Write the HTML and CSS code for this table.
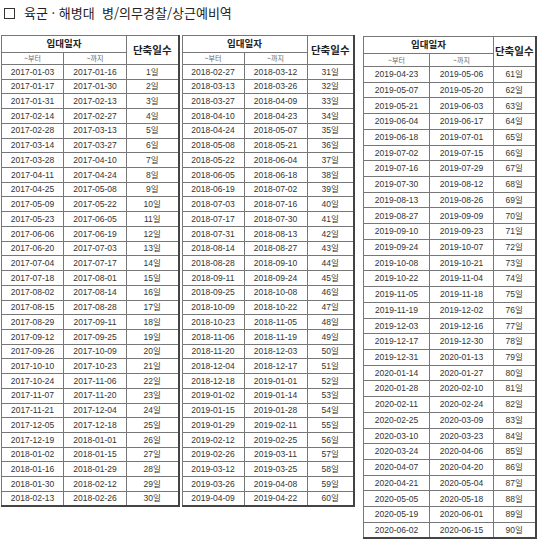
FILE: index.html
```html
<!DOCTYPE html>
<html lang="ko">
<head>
<meta charset="utf-8">
<link rel="stylesheet" href="styles.css">
</head>
<body>
<div class="title"><span class="box"></span><span class="title-text">육군 · 해병대&nbsp; 병/의무경찰/상근예비역</span></div>
<div class="tables">
<table class="t t1">
<colgroup><col class="c1"><col class="c2"><col class="c3"></colgroup>
<thead>
<tr class="h1"><th colspan="2">입대일자</th><th rowspan="2" class="days">단축일수</th></tr>
<tr class="h2"><th class="sub">~부터</th><th class="sub">~까지</th></tr>
</thead>
<tbody>
<tr><td>2017-01-03</td><td>2017-01-16</td><td>1일</td></tr>
<tr><td>2017-01-17</td><td>2017-01-30</td><td>2일</td></tr>
<tr><td>2017-01-31</td><td>2017-02-13</td><td>3일</td></tr>
<tr><td>2017-02-14</td><td>2017-02-27</td><td>4일</td></tr>
<tr><td>2017-02-28</td><td>2017-03-13</td><td>5일</td></tr>
<tr><td>2017-03-14</td><td>2017-03-27</td><td>6일</td></tr>
<tr><td>2017-03-28</td><td>2017-04-10</td><td>7일</td></tr>
<tr><td>2017-04-11</td><td>2017-04-24</td><td>8일</td></tr>
<tr><td>2017-04-25</td><td>2017-05-08</td><td>9일</td></tr>
<tr><td>2017-05-09</td><td>2017-05-22</td><td>10일</td></tr>
<tr><td>2017-05-23</td><td>2017-06-05</td><td>11일</td></tr>
<tr><td>2017-06-06</td><td>2017-06-19</td><td>12일</td></tr>
<tr><td>2017-06-20</td><td>2017-07-03</td><td>13일</td></tr>
<tr><td>2017-07-04</td><td>2017-07-17</td><td>14일</td></tr>
<tr><td>2017-07-18</td><td>2017-08-01</td><td>15일</td></tr>
<tr><td>2017-08-02</td><td>2017-08-14</td><td>16일</td></tr>
<tr><td>2017-08-15</td><td>2017-08-28</td><td>17일</td></tr>
<tr><td>2017-08-29</td><td>2017-09-11</td><td>18일</td></tr>
<tr><td>2017-09-12</td><td>2017-09-25</td><td>19일</td></tr>
<tr><td>2017-09-26</td><td>2017-10-09</td><td>20일</td></tr>
<tr><td>2017-10-10</td><td>2017-10-23</td><td>21일</td></tr>
<tr><td>2017-10-24</td><td>2017-11-06</td><td>22일</td></tr>
<tr><td>2017-11-07</td><td>2017-11-20</td><td>23일</td></tr>
<tr><td>2017-11-21</td><td>2017-12-04</td><td>24일</td></tr>
<tr><td>2017-12-05</td><td>2017-12-18</td><td>25일</td></tr>
<tr><td>2017-12-19</td><td>2018-01-01</td><td>26일</td></tr>
<tr><td>2018-01-02</td><td>2018-01-15</td><td>27일</td></tr>
<tr><td>2018-01-16</td><td>2018-01-29</td><td>28일</td></tr>
<tr><td>2018-01-30</td><td>2018-02-12</td><td>29일</td></tr>
<tr><td>2018-02-13</td><td>2018-02-26</td><td>30일</td></tr>
</tbody>
</table>
<table class="t t2">
<colgroup><col class="c1"><col class="c2"><col class="c3"></colgroup>
<thead>
<tr class="h1"><th colspan="2">입대일자</th><th rowspan="2" class="days">단축일수</th></tr>
<tr class="h2"><th class="sub">~부터</th><th class="sub">~까지</th></tr>
</thead>
<tbody>
<tr><td>2018-02-27</td><td>2018-03-12</td><td>31일</td></tr>
<tr><td>2018-03-13</td><td>2018-03-26</td><td>32일</td></tr>
<tr><td>2018-03-27</td><td>2018-04-09</td><td>33일</td></tr>
<tr><td>2018-04-10</td><td>2018-04-23</td><td>34일</td></tr>
<tr><td>2018-04-24</td><td>2018-05-07</td><td>35일</td></tr>
<tr><td>2018-05-08</td><td>2018-05-21</td><td>36일</td></tr>
<tr><td>2018-05-22</td><td>2018-06-04</td><td>37일</td></tr>
<tr><td>2018-06-05</td><td>2018-06-18</td><td>38일</td></tr>
<tr><td>2018-06-19</td><td>2018-07-02</td><td>39일</td></tr>
<tr><td>2018-07-03</td><td>2018-07-16</td><td>40일</td></tr>
<tr><td>2018-07-17</td><td>2018-07-30</td><td>41일</td></tr>
<tr><td>2018-07-31</td><td>2018-08-13</td><td>42일</td></tr>
<tr><td>2018-08-14</td><td>2018-08-27</td><td>43일</td></tr>
<tr><td>2018-08-28</td><td>2018-09-10</td><td>44일</td></tr>
<tr><td>2018-09-11</td><td>2018-09-24</td><td>45일</td></tr>
<tr><td>2018-09-25</td><td>2018-10-08</td><td>46일</td></tr>
<tr><td>2018-10-09</td><td>2018-10-22</td><td>47일</td></tr>
<tr><td>2018-10-23</td><td>2018-11-05</td><td>48일</td></tr>
<tr><td>2018-11-06</td><td>2018-11-19</td><td>49일</td></tr>
<tr><td>2018-11-20</td><td>2018-12-03</td><td>50일</td></tr>
<tr><td>2018-12-04</td><td>2018-12-17</td><td>51일</td></tr>
<tr><td>2018-12-18</td><td>2019-01-01</td><td>52일</td></tr>
<tr><td>2019-01-02</td><td>2019-01-14</td><td>53일</td></tr>
<tr><td>2019-01-15</td><td>2019-01-28</td><td>54일</td></tr>
<tr><td>2019-01-29</td><td>2019-02-11</td><td>55일</td></tr>
<tr><td>2019-02-12</td><td>2019-02-25</td><td>56일</td></tr>
<tr><td>2019-02-26</td><td>2019-03-11</td><td>57일</td></tr>
<tr><td>2019-03-12</td><td>2019-03-25</td><td>58일</td></tr>
<tr><td>2019-03-26</td><td>2019-04-08</td><td>59일</td></tr>
<tr><td>2019-04-09</td><td>2019-04-22</td><td>60일</td></tr>
</tbody>
</table>
<table class="t t3">
<colgroup><col class="c1"><col class="c2"><col class="c3"></colgroup>
<thead>
<tr class="h1"><th colspan="2">입대일자</th><th rowspan="2" class="days">단축일수</th></tr>
<tr class="h2"><th class="sub">~부터</th><th class="sub">~까지</th></tr>
</thead>
<tbody>
<tr><td>2019-04-23</td><td>2019-05-06</td><td>61일</td></tr>
<tr><td>2019-05-07</td><td>2019-05-20</td><td>62일</td></tr>
<tr><td>2019-05-21</td><td>2019-06-03</td><td>63일</td></tr>
<tr><td>2019-06-04</td><td>2019-06-17</td><td>64일</td></tr>
<tr><td>2019-06-18</td><td>2019-07-01</td><td>65일</td></tr>
<tr><td>2019-07-02</td><td>2019-07-15</td><td>66일</td></tr>
<tr><td>2019-07-16</td><td>2019-07-29</td><td>67일</td></tr>
<tr><td>2019-07-30</td><td>2019-08-12</td><td>68일</td></tr>
<tr><td>2019-08-13</td><td>2019-08-26</td><td>69일</td></tr>
<tr><td>2019-08-27</td><td>2019-09-09</td><td>70일</td></tr>
<tr><td>2019-09-10</td><td>2019-09-23</td><td>71일</td></tr>
<tr><td>2019-09-24</td><td>2019-10-07</td><td>72일</td></tr>
<tr><td>2019-10-08</td><td>2019-10-21</td><td>73일</td></tr>
<tr><td>2019-10-22</td><td>2019-11-04</td><td>74일</td></tr>
<tr><td>2019-11-05</td><td>2019-11-18</td><td>75일</td></tr>
<tr><td>2019-11-19</td><td>2019-12-02</td><td>76일</td></tr>
<tr><td>2019-12-03</td><td>2019-12-16</td><td>77일</td></tr>
<tr><td>2019-12-17</td><td>2019-12-30</td><td>78일</td></tr>
<tr><td>2019-12-31</td><td>2020-01-13</td><td>79일</td></tr>
<tr><td>2020-01-14</td><td>2020-01-27</td><td>80일</td></tr>
<tr><td>2020-01-28</td><td>2020-02-10</td><td>81일</td></tr>
<tr><td>2020-02-11</td><td>2020-02-24</td><td>82일</td></tr>
<tr><td>2020-02-25</td><td>2020-03-09</td><td>83일</td></tr>
<tr><td>2020-03-10</td><td>2020-03-23</td><td>84일</td></tr>
<tr><td>2020-03-24</td><td>2020-04-06</td><td>85일</td></tr>
<tr><td>2020-04-07</td><td>2020-04-20</td><td>86일</td></tr>
<tr><td>2020-04-21</td><td>2020-05-04</td><td>87일</td></tr>
<tr><td>2020-05-05</td><td>2020-05-18</td><td>88일</td></tr>
<tr><td>2020-05-19</td><td>2020-06-01</td><td>89일</td></tr>
<tr><td>2020-06-02</td><td>2020-06-15</td><td>90일</td></tr>
</tbody>
</table>
</div>
</body>
</html>
```
FILE: styles.css
```css
html, body {
  margin: 0;
  padding: 0;
  background: #fff;
}
body {
  font-family: "Liberation Sans", "Noto Sans CJK KR", sans-serif;
  color: #333;
  width: 540px;
  height: 540px;
  overflow: hidden;
}
.title {
  display: flex;
  align-items: center;
  gap: 9px;
  height: 16px;
  padding: 5px 0 0 4px;
  font-family: "Noto Sans CJK KR", sans-serif;
  font-size: 13px;
  font-weight: 400;
  color: #222;
  line-height: 16px;
}
.box {
  width: 9px;
  height: 9px;
  border: 1px solid #333;
}
.tables {
  display: flex;
  align-items: flex-start;
  margin-top: 14px;
  padding-left: 1px;
}
.t {
  border-collapse: collapse;
  table-layout: fixed;
  border-top: 1px solid #aaa;
  border-left: 1px solid #aaa;
  border-right: 2px solid #444;
  border-bottom: 2px solid #444;
}
.t th, .t td {
  border: 1px solid #777;
  padding: 0;
  text-align: center;
  vertical-align: middle;
  overflow: hidden;
  white-space: nowrap;
}
.t th {
  font-family: "Noto Sans CJK KR", sans-serif;
  font-weight: 700;
  font-size: 9.5px;
  color: #222;
  line-height: 1;
}
.t th.days {
  font-size: 10.5px;
}
.t th.sub {
  font-weight: 400;
  font-size: 7px;
  color: #666;
}
.t td {
  font-size: 8.5px;
  color: #333;
  line-height: 1;
}
.t tr.h1 { height: 17px; }
.t tr.h2 { height: 12px; }
.t tbody tr { height: 14.73px; }
.t1 { width: 177px; }
.t1 .c1 { width: 62px; }
.t1 .c2 { width: 63px; }
.t1 .c3 { width: 52px; }
.t2 { width: 172px; margin-left: 2px; }
.t2 .c1 { width: 62px; }
.t2 .c2 { width: 63px; }
.t2 .c3 { width: 47px; }
.t3 { width: 172px; margin-left: 8px; margin-top: 1px; }
.t3 .c1 { width: 66px; }
.t3 .c2 { width: 64px; }
.t3 .c3 { width: 42px; }
.t3 tr.h2 { height: 13px; }
.t3 tbody tr { height: 15.73px; }
```
